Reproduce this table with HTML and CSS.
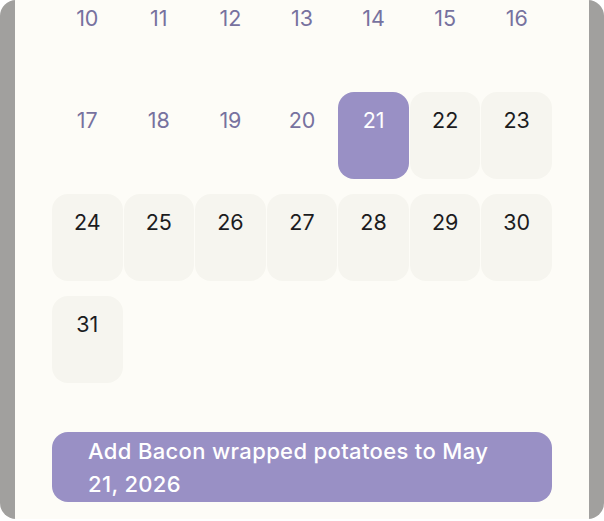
FILE: index.html
```html
<!DOCTYPE html>
<html lang="en">
<head>
<meta charset="utf-8">
<title>Calendar</title>
<link rel="stylesheet" href="styles.css">
</head>
<body>
<div class="frame">
  <div class="panel">
    <div class="grid">
      <div class="day past">10</div>
      <div class="day past">11</div>
      <div class="day past">12</div>
      <div class="day past">13</div>
      <div class="day past">14</div>
      <div class="day past">15</div>
      <div class="day past">16</div>
      <div class="day past">17</div>
      <div class="day past">18</div>
      <div class="day past">19</div>
      <div class="day past">20</div>
      <div class="day selected">21</div>
      <div class="day">22</div>
      <div class="day">23</div>
      <div class="day">24</div>
      <div class="day">25</div>
      <div class="day">26</div>
      <div class="day">27</div>
      <div class="day">28</div>
      <div class="day">29</div>
      <div class="day">30</div>
      <div class="day">31</div>
    </div>
    <button class="add">Add Bacon wrapped potatoes to May 21, 2026</button>
  </div>
</div>
</body>
</html>
```
FILE: styles.css
```css
html, body {
  margin: 0;
  padding: 0;
  background: #ffffff;
}
body {
  width: 604px;
  height: 521px;
  overflow: hidden;
  font-family: Inter, "Noto Sans", sans-serif;
}
.frame {
  width: 604px;
  height: 519px;
  background: #a1a09e;
  border-radius: 16px;
  padding: 0 15px;
  box-sizing: border-box;
  overflow: hidden;
}
.panel {
  height: 100%;
  background: #fdfcf7;
  padding: 0 37px;
  box-sizing: border-box;
  overflow: hidden;
}
.grid {
  margin-top: -10px;
  display: grid;
  grid-template-columns: repeat(7, 1fr);
  column-gap: 1px;
  row-gap: 15px;
}
.day {
  height: 87px;
  box-sizing: border-box;
  padding-top: 16px;
  line-height: 24px;
  font-size: 21.5px;
  text-align: center;
  color: #1c1c1e;
  background: #f6f5ef;
  border-radius: 16px;
}
.day.past {
  background: transparent;
  color: #77729f;
}
.day.selected {
  background: #9990c5;
  color: #ffffff;
}
.add {
  display: block;
  width: 100%;
  margin-top: 49px;
  padding: 3px 36px 1px;
  border: none;
  border-radius: 16px;
  background: #9990c5;
  color: #ffffff;
  font-family: Inter, "Noto Sans", sans-serif;
  font-size: 22px;
  font-weight: 500;
  letter-spacing: 0.35px;
  line-height: 33px;
  text-align: left;
}
```
